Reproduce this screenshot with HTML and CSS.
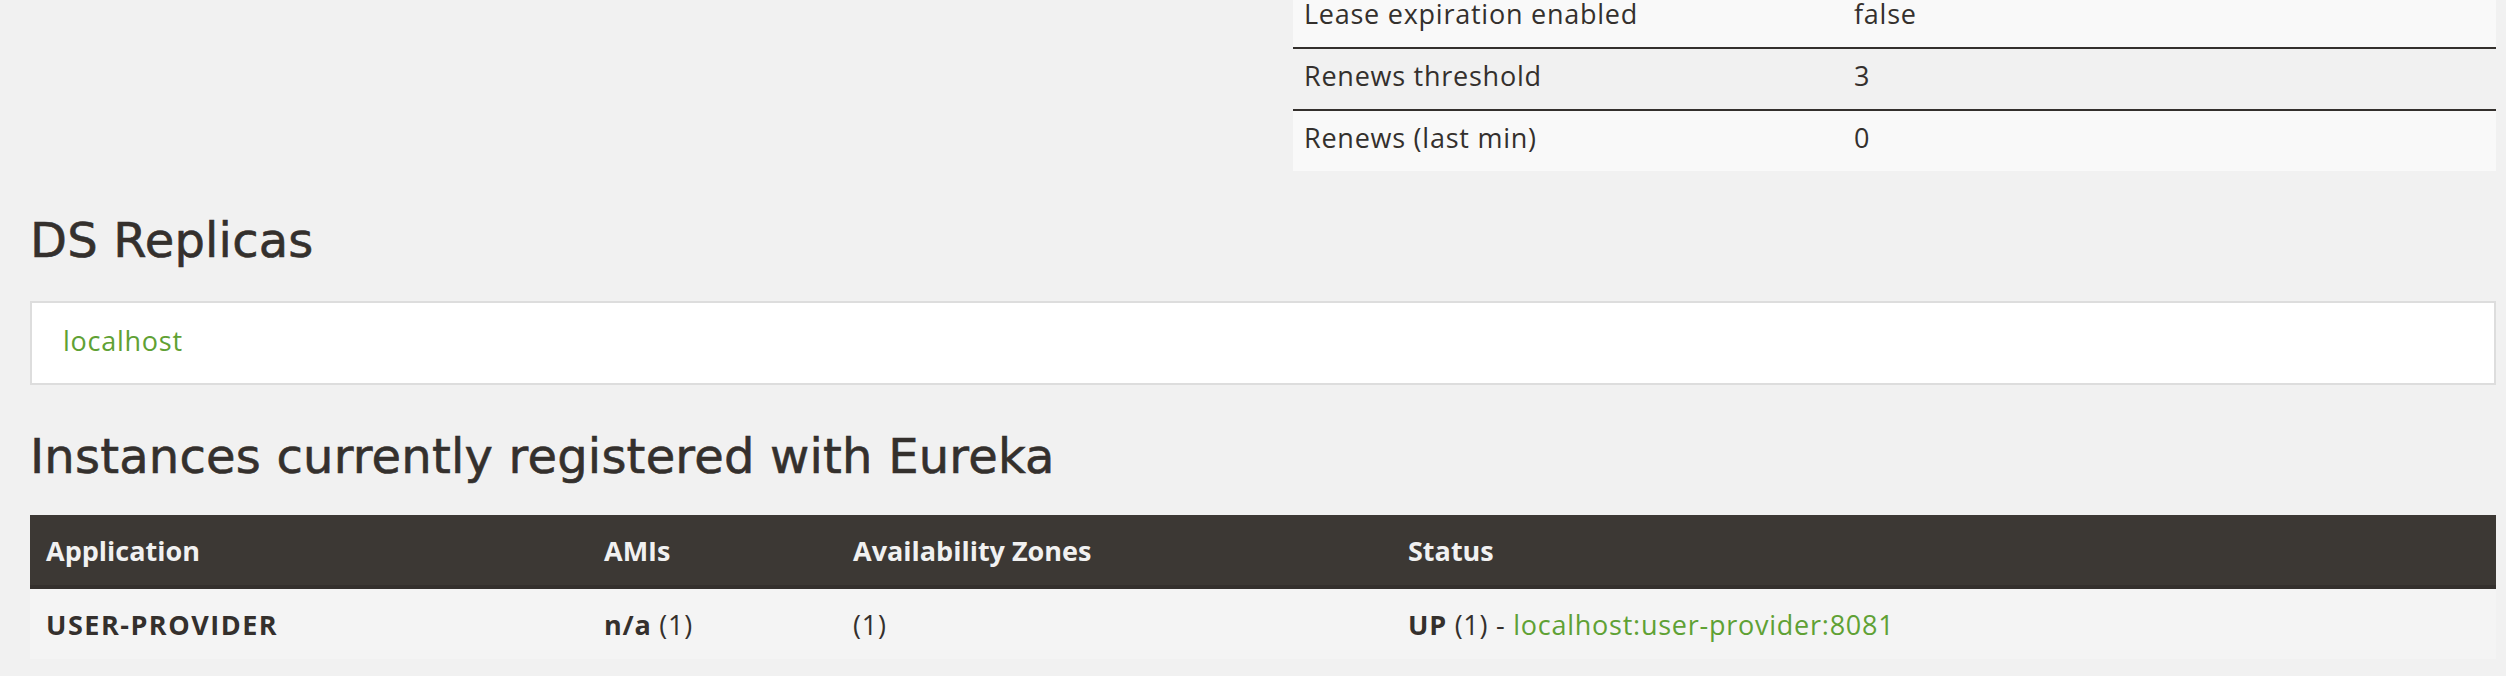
FILE: index.html
```html
<!DOCTYPE html>
<html lang="en">
<head>
<meta charset="utf-8">
<title>Eureka</title>
<link rel="stylesheet" href="styles.css">
</head>
<body>
<div class="page">
  <div class="status-grid">
    <div class="status-col"></div>
    <table class="info-table">
      <colgroup><col class="info-key"><col class="info-val"></colgroup>
      <tbody>
        <tr class="odd"><td>Lease expiration enabled</td><td>false</td></tr>
        <tr class="even"><td>Renews threshold</td><td>3</td></tr>
        <tr class="odd"><td>Renews (last min)</td><td>0</td></tr>
      </tbody>
    </table>
  </div>

  <h1 class="title replicas-title">DS Replicas</h1>
  <ul class="replicas">
    <li><a href="#">localhost</a></li>
  </ul>

  <h1 class="title instances-title">Instances currently registered with Eureka</h1>
  <table class="instances">
    <colgroup>
      <col class="c-app"><col class="c-ami"><col class="c-zone"><col class="c-status">
    </colgroup>
    <thead>
      <tr><th>Application</th><th>AMIs</th><th>Availability Zones</th><th>Status</th></tr>
    </thead>
    <tbody>
      <tr>
        <td><b class="app-name">USER-PROVIDER</b></td>
        <td><b>n/a</b> (1)</td>
        <td>(1)</td>
        <td><b>UP</b> (1) - <a href="#">localhost:user-provider:8081</a></td>
      </tr>
    </tbody>
  </table>
</div>
</body>
</html>
```

FILE: styles.css
```css
html, body {
  margin: 0;
  padding: 0;
  background: #f1f1f1;
  color: #34302d;
  font-family: "Open Sans", "Noto Sans", sans-serif;
  font-size: 27px;
  letter-spacing: 0.75px;
}

.page {
  margin-top: -13px;
  padding: 0 10px 0 30px;
}

a {
  color: #5fa134;
  text-decoration: none;
}

.status-grid {
  display: grid;
  grid-template-columns: 1fr 1203px;
  column-gap: 60px;
}

.info-table {
  width: 100%;
  border-collapse: collapse;
  table-layout: fixed;
}

.info-key { width: 550px; }

.info-table td {
  height: 60px;
  box-sizing: border-box;
  padding: 8px 11px 15px;
  line-height: 37px;
  vertical-align: top;
}

.info-table tr + tr td {
  border-top: 2px solid #34302d;
}

.info-table tr.odd { background: #f9f9f9; }
.info-table tr.even { background: #f1f1f1; }

.title {
  margin: 0;
  font-family: "DejaVu Sans", "Noto Sans", sans-serif;
  font-weight: 400;
  font-size: 48px;
  line-height: 60px;
  letter-spacing: 0.2px;
  color: #34302d;
  -webkit-text-stroke: 0.6px #34302d;
}

.replicas-title {
  margin-top: 39px;
}

.replicas {
  list-style: none;
  margin: 31px 0 0;
  padding: 0 0 0 31px;
  height: 80px;
  background: #fff;
  border: 2px solid #dddddd;
}

.replicas li {
  padding-top: 13px;
  line-height: 50px;
}

.instances-title {
  margin-top: 41px;
}

.instances {
  width: 100%;
  margin-top: 29px;
  border-collapse: collapse;
  table-layout: fixed;
}

.c-app { width: 558px; }
.c-ami { width: 249px; }
.c-zone { width: 555px; }

.instances th {
  background: #3c3834;
  color: #f1f1f1;
  text-align: left;
  font-weight: 700;
  font-size: 27px;
  letter-spacing: 0;
  height: 72px;
  box-sizing: border-box;
  padding: 0 16px;
  border-bottom: 4px solid #34302d;
}

.instances td {
  background: #f4f4f4;
  height: 72px;
  box-sizing: border-box;
  padding: 0 16px;
}

.app-name {
  letter-spacing: 1.5px;
}
```
